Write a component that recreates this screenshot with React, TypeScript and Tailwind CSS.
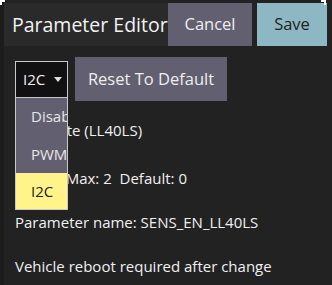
export default function App() {
  const font = { fontFamily: '"Open Sans", sans-serif' };
  return (
    <div className="relative w-[332px] h-[285px] bg-[#222222] overflow-hidden text-white" style={font}>
      {/* left edge strip */}
      <div className="absolute left-0 top-0 w-[4px] h-full bg-[#1c1c1c]" />
      {/* corner marks */}
      <div className="absolute left-0 top-0 w-[5px] h-[5px] border-l-2 border-t-2 border-white" />
      <div className="absolute left-[321px] top-0 w-[5px] h-[5px] border-r-2 border-t-2 border-white" />

      <div className="flex flex-col pl-[4px] pt-[3px]">
        {/* header */}
        <div className="flex h-[43px]">
          <div className="w-[164px] bg-[#2a2a2a] flex items-center pl-[8px] text-[19.5px] text-[#f2f2f2]">
            Parameter Editor
          </div>
          <button className="w-[84px] bg-[#626070] text-[16.5px] text-[#eeeeee]">Cancel</button>
          <div className="w-[5px]" />
          <button className="w-[70px] bg-[#8db8c3] text-[16.5px] text-[#222222]">Save</button>
        </div>

        <div className="flex flex-col pl-[11px] text-[15px] text-[#f0f0f0]">
          <div className="flex items-center gap-[7px] mt-[11px]">
            <div className="w-[53px] h-[37px] border border-[#c8c8c8] bg-[#111111] flex items-center pl-[7px] gap-[9px]">
              <span>I2C</span>
              <svg width="8" height="5" viewBox="0 0 8 5">
                <path d="M0 0 L8 0 L4 5 Z" fill="#e0e0e0" />
              </svg>
            </div>
            <button className="w-[152px] h-[44px] bg-[#626070] text-[16.5px] text-[#eeeeee]">Reset To Default</button>
          </div>

          <div className="mt-[19px] h-[20px] leading-[20px]">Lidar-Lite (LL40LS)</div>
          <div className="mt-[28px] h-[20px] leading-[20px] whitespace-pre">Min: 0  Max: 2  Default: 0</div>
          <div className="mt-[24px] h-[20px] leading-[20px]">Parameter name: SENS_EN_LL40LS</div>
          <div className="mt-[24px] h-[20px] leading-[20px]">Vehicle reboot required after change</div>
        </div>
      </div>

      {/* open combo popup */}
      <div className="absolute left-[15px] top-[97px] w-[53px] h-[113px] border border-[#c8c8c8] flex flex-col overflow-hidden text-[15px]">
        <div className="h-[37px] bg-[#626070] flex items-center pl-[15px] text-[#e6e6e6] whitespace-nowrap">Disabled</div>
        <div className="h-[38px] bg-[#626070] flex items-center pl-[15px] text-[#e6e6e6]">PWM</div>
        <div className="flex-1 bg-[#fff38a] flex items-center pl-[15px] text-[#222222]">I2C</div>
      </div>
    </div>
  );
}
